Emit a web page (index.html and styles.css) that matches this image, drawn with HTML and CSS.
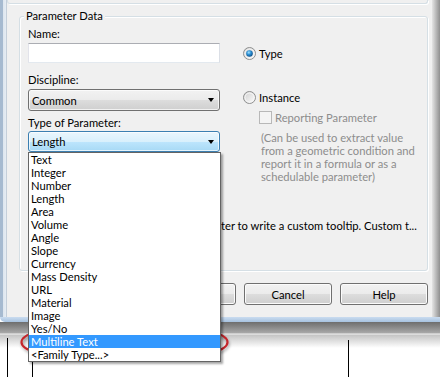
FILE: index.html
```html
<html>
<head>
    <link rel="stylesheet" href="styles.css">
</head>
<body>
<div class="screen">
    <div class="win">
        <div class="win-body">
            <div class="frame-l"></div>
            <div class="dialog">
                <div class="top-box"></div>
                <fieldset class="group">
                    <legend>Parameter Data</legend>
                    <div class="cols">
                        <div class="col-left">
                            <div class="lbl lbl-name">Name:</div>
                            <div class="textbox"></div>
                            <div class="lbl lbl-disc">Discipline:</div>
                            <div class="combo"><span>Common</span><i class="arrow"></i></div>
                            <div class="lbl lbl-type">Type of Parameter:</div>
                            <div class="combo-wrap">
                                <div class="combo focus"><span>Length</span><i class="arrow"></i></div>
                                <ul class="droplist">
                                    <li>Text</li>
                                    <li>Integer</li>
                                    <li>Number</li>
                                    <li>Length</li>
                                    <li>Area</li>
                                    <li>Volume</li>
                                    <li>Angle</li>
                                    <li>Slope</li>
                                    <li>Currency</li>
                                    <li>Mass Density</li>
                                    <li>URL</li>
                                    <li>Material</li>
                                    <li>Image</li>
                                    <li>Yes/No</li>
                                    <li class="sel">Multiline Text</li>
                                    <li>&lt;Family Type...&gt;</li>
                                </ul>
                            </div>
                        </div>
                        <div class="col-right">
                            <div class="radio-row type-row">
                                <svg width="13" height="13" viewBox="0 0 13 13">
                                    <defs>
                                        <linearGradient id="rbg" x1="0" y1="0" x2="1" y2="1">
                                            <stop offset="0" stop-color="#cdcdcd"/>
                                            <stop offset="1" stop-color="#ffffff"/>
                                        </linearGradient>
                                        <radialGradient id="dot" cx="40%" cy="35%" r="70%">
                                            <stop offset="0" stop-color="#a6e4ff"/>
                                            <stop offset="0.45" stop-color="#2b8fd4"/>
                                            <stop offset="1" stop-color="#0a4a82"/>
                                        </radialGradient>
                                    </defs>
                                    <circle cx="6.5" cy="6.5" r="6" fill="url(#rbg)" stroke="#8e8f8f"/>
                                    <circle cx="6.5" cy="6.5" r="4.5" fill="none" stroke="#f4f4f4" stroke-width="1"/>
                                    <circle cx="6.5" cy="6.5" r="3.3" fill="url(#dot)"/>
                                </svg>
                                <span>Type</span>
                            </div>
                            <div class="radio-row inst-row">
                                <svg width="13" height="13" viewBox="0 0 13 13">
                                    <circle cx="6.5" cy="6.5" r="6" fill="url(#rbg)" stroke="#8e8f8f"/>
                                    <circle cx="6.5" cy="6.5" r="4.5" fill="none" stroke="#f6f6f6" stroke-width="1"/>
                                </svg>
                                <span>Instance</span>
                            </div>
                            <div class="check-row">
                                <span class="checkbox"></span>
                                <span>Reporting Parameter</span>
                            </div>
                            <p class="note">(Can be used to extract value<br>from a geometric condition and<br>report it in a formula or as a<br>schedulable parameter)</p>
                        </div>
                    </div>
                    <!-- start of the tooltip text is hidden behind the open list -->
                    <div class="tooltip-row">
                        <span class="tip-text">ter to write a custom tooltip. Custom t...</span>
                    </div>
                </fieldset>
                <div class="buttons">
                    <button class="btn">OK</button>
                    <button class="btn">Cancel</button>
                    <button class="btn">Help</button>
                </div>
            </div>
            <div class="frame-r"></div>
        </div>
        <div class="win-bottom"></div>
    </div>
    <div class="backdrop">
        <div class="vline v1"></div>
        <div class="vline v2"></div>
        <div class="vline v3"></div>
    </div>
    <!-- red mark drawn over the screenshot -->
    <svg class="mark" width="440" height="377" viewBox="0 0 440 377">
        <defs>
            <filter id="sh" x="-10%" y="-50%" width="120%" height="200%">
                <feDropShadow dx="1" dy="2" stdDeviation="1.4" flood-color="#000" flood-opacity="0.35"/>
            </filter>
        </defs>
        <rect x="21.5" y="327.5" width="206" height="29.5" rx="50" ry="14.7" fill="none" stroke="#c4262c" stroke-width="2.2" filter="url(#sh)"/>
    </svg>
</div>
</body>
</html>
```

FILE: styles.css
```css
* {
    box-sizing: border-box;
}
body {
    margin: 0;
    font-family: Lato, "Liberation Sans", sans-serif;
    font-size: 11.2px;
    color: #000;
}
.screen {
    position: relative;
    width: 440px;
    height: 377px;
    overflow: hidden;
    background: #fff;
}
.win-body {
    display: flex;
    height: 317px;
}
.frame-l {
    width: 7px;
    background: linear-gradient(to right, #a6bad0 0, #a6bad0 3px, #dde5ee 3px, #e6edf4 6px, #c5cfda 6px);
}
.dialog {
    flex: 1;
    background: #f0f0f0;
}
.frame-r {
    width: 8px;
    background: linear-gradient(to right, #e4e4e4, #cfcfcf 2px, #8f8f8f);
}
.win-bottom {
    height: 5px;
    background: linear-gradient(#cadcf0, #a7c2df);
    border-bottom-left-radius: 5px;
}

/* group boxes */
.top-box {
    height: 4px;
    margin-right: 4px;
    border: 1px solid #d5dfe5;
    border-top: 0;
    border-radius: 0 0 3px 3px;
    box-shadow: 1px 1px 0 #fff;
}
.group {
    margin: 5px 4px 0 12px;
    padding: 0 0 0 8px;
    height: 262px;
    border: 1px solid #d5dfe5;
    border-radius: 3px;
    box-shadow: inset 1px 1px 0 #fff, 1px 1px 0 #fff;
}
.group legend {
    margin-left: -4px;
    padding: 0 2px;
    line-height: 14px;
    background: #f0f0f0;
}
.cols {
    display: flex;
}
.col-left {
    width: 192px;
}
.col-right {
    margin-left: 23px;
}

/* left column */
.lbl {
    line-height: 14px;
}
.lbl-name {
    margin-top: 4px;
}
.lbl-disc {
    margin-top: 10px;
}
.lbl-type {
    margin-top: 5px;
}
.textbox {
    height: 20px;
    margin-top: 2px;
    background: #fff;
    border: 1px solid;
    border-color: #abadb3 #dbdfe6 #e3e9ef #e2e3ea;
}
.combo {
    height: 22px;
    margin-top: 2px;
    padding-left: 3px;
    display: flex;
    align-items: center;
    justify-content: space-between;
    border: 1px solid #707070;
    border-radius: 3px;
    background: linear-gradient(#f2f2f2 0%, #ebebeb 50%, #dddddd 50%, #cfcfcf 100%);
    box-shadow: inset 0 0 0 1px rgba(255,255,255,0.7);
}
.combo-wrap {
    position: relative;
    margin-top: 1px;
}
.combo.focus {
    height: 21px;
    margin-top: 0;
    border-color: #3c7fb1;
    background: linear-gradient(#eaf6fd 0%, #d9f0fc 50%, #bee6fd 50%, #a7d9f5 100%);
}
.arrow {
    width: 0;
    height: 0;
    margin-right: 5px;
    border-left: 3.5px solid transparent;
    border-right: 3.5px solid transparent;
    border-top: 4px solid #000;
}
.droplist {
    position: absolute;
    top: 100%;
    left: 0;
    width: 193px;
    margin: 0;
    padding: 0;
    list-style: none;
    background: #fff;
    border: 1px solid #646464;
    box-shadow: 2px 2px 2px rgba(0,0,0,0.35);
    z-index: 5;
}
.droplist li {
    height: 13px;
    line-height: 13px;
    padding-left: 2px;
    white-space: nowrap;
}
.droplist .sel {
    background: #3399ff;
    color: #fff;
}

/* right column */
.radio-row {
    display: flex;
    align-items: center;
    gap: 3px;
    height: 14px;
}
.type-row {
    margin-top: 23px;
}
.inst-row {
    margin-top: 30px;
}
.check-row {
    display: flex;
    align-items: center;
    gap: 3px;
    height: 13px;
    margin: 7px 0 0 16px;
    color: #8d8d8d;
}
.checkbox {
    width: 13px;
    height: 13px;
    border: 1px solid #b8b8b8;
    background: #f4f4f4;
}
.note {
    margin: 7px 0 0 18px;
    line-height: 13px;
    color: #8d8d8d;
}
.tooltip-row {
    margin: 36px 0 0 193px;
    line-height: 14px;
    white-space: nowrap;
}

/* buttons */
.buttons {
    display: flex;
    justify-content: flex-end;
    gap: 8px;
    margin: 12px 4px 0 0;
}
.btn {
    width: 88px;
    height: 22px;
    padding: 0;
    font-family: Lato, "Liberation Sans", sans-serif;
    font-size: 11.2px;
    color: #000;
    border: 1px solid #707070;
    border-radius: 3px;
    background: linear-gradient(#f2f2f2 0%, #ebebeb 50%, #dddddd 50%, #cfcfcf 100%);
    box-shadow: inset 0 0 0 1px #fbfbfb;
}

/* application behind the dialog */
.backdrop {
    position: relative;
    height: 55px;
    background: linear-gradient(#6e6e6e 0, #a8a8a8 11px, #f4f4f4 12px, #c4c4c4 13px, #fff 26px);
}
.vline {
    position: absolute;
    bottom: 0;
    width: 1px;
    background: #000;
}
.v1 {
    left: 7px;
    top: 16px;
}
.v2 {
    left: 32px;
    top: 16px;
}
.v3 {
    left: 348px;
    top: 18px;
}
.mark {
    position: absolute;
    left: 0;
    top: 0;
    pointer-events: none;
}
```
